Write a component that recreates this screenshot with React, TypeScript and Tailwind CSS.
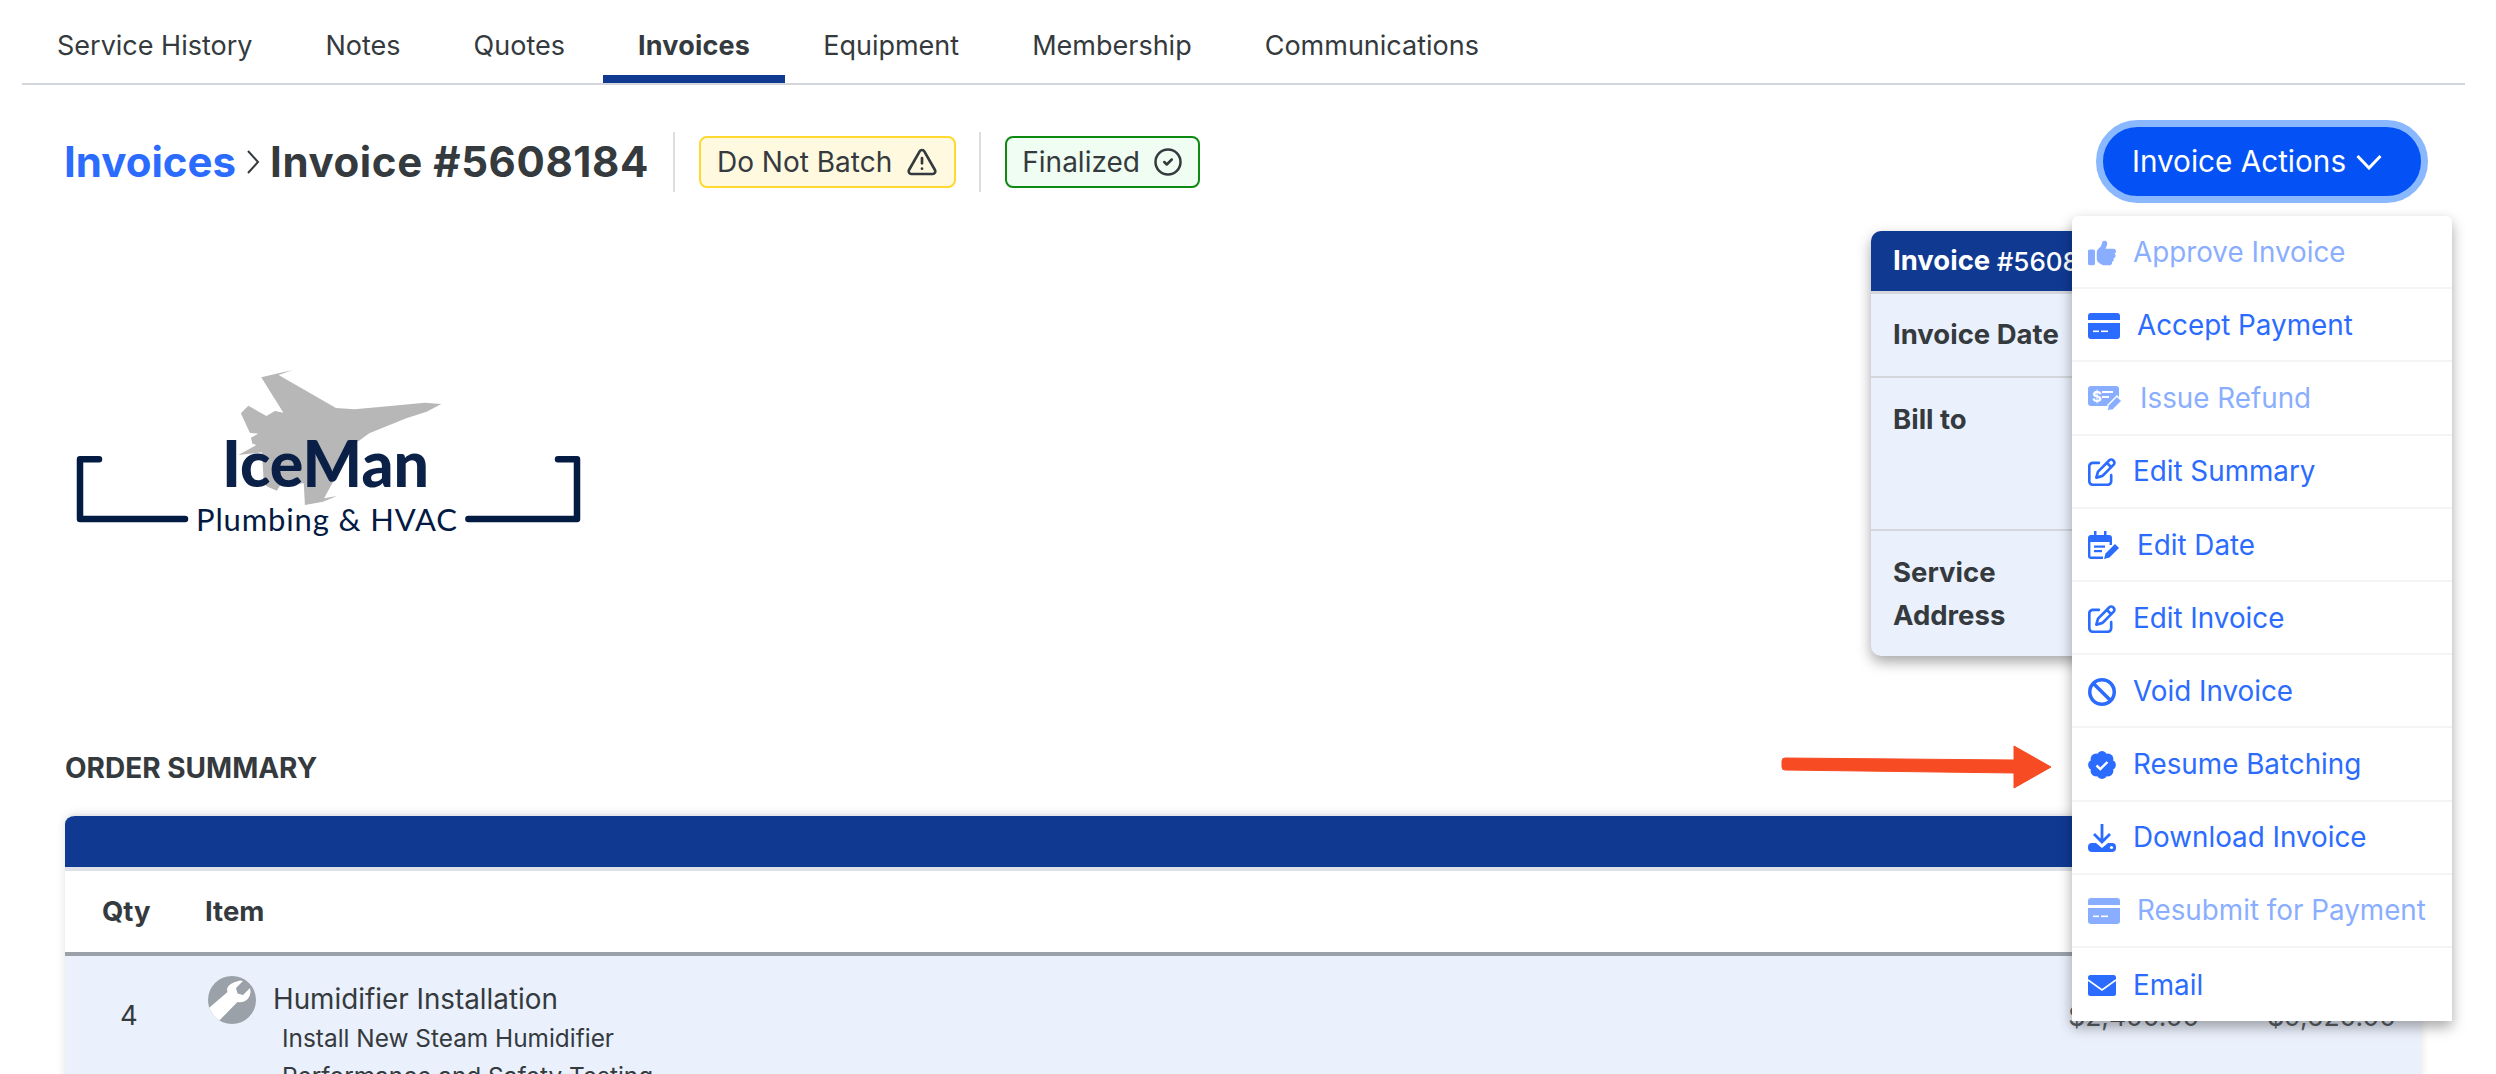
import { CircleCheck, TriangleAlert } from 'lucide-react'
import { FaBan, FaRegPenToSquare, FaThumbsUp } from 'react-icons/fa6'

const tabs = ['Service History', 'Notes', 'Quotes', 'Invoices', 'Equipment', 'Membership', 'Communications']

function CardIcon() {
  return (
    <svg width="32" height="26" viewBox="0 0 32 26" fill="currentColor">
      <path d="M3 0h26a3 3 0 0 1 3 3v4H0V3a3 3 0 0 1 3-3z" />
      <path d="M0 10h32v13a3 3 0 0 1-3 3H3a3 3 0 0 1-3-3z" />
      <rect x="5" y="17.5" width="6" height="1.6" fill="#fff" />
      <rect x="13" y="17.5" width="7" height="1.6" fill="#fff" />
    </svg>
  )
}

function RefundIcon() {
  return (
    <svg width="35" height="25" viewBox="0 0 35 25" fill="currentColor">
      <rect x="0" y="0" width="31" height="20" rx="3" />
      <text x="4" y="16" fontSize="15" fontWeight="700" fill="#fff" fontFamily="Inter, sans-serif">$</text>
      <rect x="14" y="5" width="11" height="2" fill="#fff" />
      <rect x="14" y="10" width="7" height="2" fill="#fff" />
      <path d="M19 25l1-6 9-9 5 5-9 9z" stroke="#fff" strokeWidth="1.5" />
    </svg>
  )
}

function DateIcon() {
  return (
    <svg width="32" height="28" viewBox="0 0 32 28" fill="currentColor">
      <rect x="6" y="0" width="2.5" height="5" />
      <rect x="16" y="0" width="2.5" height="5" />
      <path d="M3 4h18a3 3 0 0 1 3 3v4H0V7a3 3 0 0 1 3-3z" />
      <path d="M1.2 10v15a1.8 1.8 0 0 0 1.8 1.8h12M22.8 10v4" fill="none" stroke="currentColor" strokeWidth="2.4" />
      <rect x="6" y="14.5" width="11" height="2.2" />
      <rect x="6" y="19" width="8" height="2.2" />
      <path d="M16 28l1.500-5.500L27 13l4 4-9.500 9.500z" />
    </svg>
  )
}

function BadgeIcon() {
  const lobes = [0, 45, 90, 135, 180, 225, 270, 315]
  return (
    <svg width="28" height="28" viewBox="0 0 28 28" fill="currentColor">
      <circle cx="14" cy="14" r="11.500" />
      {lobes.map((a) => (
        <circle
          key={a}
          cx={14 + 8.5 * Math.cos((a * Math.PI) / 180)}
          cy={14 + 8.5 * Math.sin((a * Math.PI) / 180)}
          r="5.4"
        />
      ))}
      <path d="M8.500 14.500l3.800 3.500 7.200-7" fill="none" stroke="#fff" strokeWidth="2.400" />
    </svg>
  )
}

function DownloadIcon() {
  return (
    <svg width="28" height="28" viewBox="0 0 28 28" fill="currentColor">
      <path d="M14 0v17M6 10l8 8 8-8" fill="none" stroke="currentColor" strokeWidth="2.800" />
      <path d="M4 19h4l6 5 6-5h4a4 4 0 0 1 4 4v1a4 4 0 0 1-4 4H4a4 4 0 0 1-4-4v-1a4 4 0 0 1 4-4z" />
      <circle cx="23.500" cy="23.500" r="1.600" fill="#fff" />
    </svg>
  )
}

function EmailIcon() {
  return (
    <svg width="28" height="21" viewBox="0 0 28 21">
      <rect width="28" height="21" rx="2.500" fill="currentColor" />
      <path d="M0 5l14 10L28 5" fill="none" stroke="#fff" strokeWidth="1.600" />
    </svg>
  )
}

const menu = [
  { label: 'Approve Invoice', icon: <FaThumbsUp size={28} />, off: true },
  { label: 'Accept Payment', icon: <CardIcon /> },
  { label: 'Issue Refund', icon: <RefundIcon />, off: true },
  { label: 'Edit Summary', icon: <FaRegPenToSquare size={28} /> },
  { label: 'Edit Date', icon: <DateIcon /> },
  { label: 'Edit Invoice', icon: <FaRegPenToSquare size={28} /> },
  { label: 'Void Invoice', icon: <FaBan size={28} /> },
  { label: 'Resume Batching', icon: <BadgeIcon /> },
  { label: 'Download Invoice', icon: <DownloadIcon /> },
  { label: 'Resubmit for Payment', icon: <CardIcon />, off: true },
  { label: 'Email', icon: <EmailIcon /> },
]

function Logo() {
  return (
    <svg width="580" height="220" viewBox="0 0 580 220" fontFamily="Lato, sans-serif">
      <path
        fill="#b7b7b7"
        d="M252.700 30L221.200 37.300 243.400 72.700 234.900 71 226.400 76 208.300 65.700 200.900 73.300 209.800 92.700 218.300 93.700 210.900 97.700 212.400 103.700 216.400 105 198.300 115 222 112.300 223.800 143.300 227.500 146.700 236.800 150.700 240.500 145 263.800 143.300 264.900 165 283 161.700 297.100 156 284.100 158.300 292.300 143.300 310.800 106.700 329.300 93.300 366.300 78.300 386.600 71.700 401.400 64 384.800 62.700 342.200 66.700 314.500 69.300 296 68 238.600 35z"
      />
      <g fill="none" stroke="#031a42" strokeWidth="6.500" strokeLinecap="round" strokeLinejoin="round">
        <path d="M59 119.300H40V179H145" />
        <path d="M518 119.300H537V179H428.400" />
      </g>
      <text x="182" y="147" fontSize="64" fontWeight="900" fill="#031a42" fillOpacity="0.97" textLength="207" lengthAdjust="spacingAndGlyphs">
        IceMan
      </text>
      <text x="156" y="191" fontSize="31" fill="#031a42" textLength="261" lengthAdjust="spacing">
        Plumbing &amp; HVAC
      </text>
    </svg>
  )
}

export default function App() {
  return (
    <div className="relative h-[1074px] w-[2496px] overflow-hidden bg-white font-[Inter,sans-serif] text-[#343a3d]">
      {/* Tabs */}
      <nav className="ml-[22px] mr-[31px] flex h-[85px] gap-[3px] border-b-2 border-[#d3d7dc]">
        {tabs.map((t) => (
          <div
            key={t}
            className={
              t === 'Invoices'
                ? 'flex h-[83px] items-center border-b-8 border-[#103a92] px-[35px] pt-[18px] text-[27px] font-bold tracking-[0.2px]'
                : 'flex h-[83px] items-center px-[35px] pt-[10px] text-[27px]'
            }
          >
            {t}
          </div>
        ))}
      </nav>

      {/* Title row */}
      <div className="flex items-center pl-[64px] pr-[68px] pt-[35px]">
        <span className="text-[42px] font-bold text-[#2b6cff]">Invoices</span>
        <svg className="mx-[10px]" width="14" height="24" viewBox="0 0 14 24" fill="none" stroke="#343a3d" strokeWidth="2">
          <path d="M2 1l10 11L2 23" />
        </svg>
        <span className="text-[42px] font-bold tracking-[0.6px]">Invoice #5608184</span>
        <div className="ml-[24px] h-[60px] w-[2px] bg-[#dcdfe2]" />
        <div className="ml-[24px] flex h-[52px] items-center gap-[14px] rounded-[8px] border-2 border-[#ffd92e] bg-[#fff9e0] px-[16px] text-[28px]">
          Do Not Batch
          <TriangleAlert size={32} strokeWidth={2} />
        </div>
        <div className="ml-[23px] h-[60px] w-[2px] bg-[#dcdfe2]" />
        <div className="ml-[24px] flex h-[52px] items-center gap-[13px] rounded-[8px] border-2 border-[#0c8a12] bg-[#f0fdf2] px-[15px] text-[28px]">
          Finalized
          <CircleCheck size={30} strokeWidth={2} />
        </div>
        <button className="ml-auto flex h-[83px] w-[332px] items-center justify-center gap-[10px] rounded-full border-[7px] border-[#8ab8ff] bg-[#0452f6] pr-[10px] text-[29.7px] text-white">
          Invoice Actions
          <svg width="26" height="16" viewBox="0 0 26 16" fill="none" stroke="#fff" strokeWidth="3">
            <path d="M1.500 2L13 14 24.500 2" />
          </svg>
        </button>
      </div>

      {/* Logo and invoice panel */}
      <div className="mt-[28px] flex justify-between pl-[40px] pr-[72px]">
        <div className="pt-[109px]">
          <Logo />
        </div>
        <div className="h-[425px] w-[553px] overflow-hidden rounded-[10px] bg-[#eaf0fc] text-[27.5px] font-bold shadow-[0_6px_14px_rgba(0,0,0,0.35)]">
          <div className="flex h-[63px] items-center border-b-[3px] border-[#d3d7dc] bg-[#103a92] px-[22px] text-white">
            Invoice&nbsp;<span className="text-[26px] font-medium">#5608184</span>
          </div>
          <div className="flex h-[84px] items-center border-b-2 border-[#d3d7dc] px-[22px]">Invoice Date</div>
          <div className="h-[153px] border-b-2 border-[#d3d7dc] px-[22px] pt-[20px] leading-[42px]">Bill to</div>
          <div className="px-[22px] pt-[20px] leading-[43px]">
            Service
            <br />
            Address
          </div>
        </div>
      </div>

      {/* Order summary */}
      <div className="mt-[95px] pl-[65px] pr-[75px]">
        <h2 className="h-[34px] text-[28px] font-bold leading-[34px]">ORDER SUMMARY</h2>
        <div className="mt-[29px] overflow-hidden rounded-t-[10px] border-t-2 border-[#e6e8eb] shadow-[0_0_10px_rgba(0,0,0,0.12)]">
          <div className="h-[51px] border-b-4 border-[#dee2e8] bg-[#103a92] box-content" />
          <div className="flex h-[81px] items-center text-[27.5px] font-bold">
            <span className="w-[140px] pl-[37px]">Qty</span>
            <span>Item</span>
          </div>
          <div className="flex h-[200px] border-t-4 border-[#9aa1a9] bg-[#eaf0fc] text-[27.5px]">
            <span className="w-[143px] pt-[41px] pl-[55px] leading-[36px]">4</span>
            <div className="pt-[20px]">
              <svg width="48" height="48" viewBox="0 0 48 48">
                <defs>
                  <clipPath id="wrench-clip">
                    <circle cx="24" cy="24" r="24" />
                  </clipPath>
                </defs>
                <circle cx="24" cy="24" r="24" fill="#9aa1a9" />
                <g clipPath="url(#wrench-clip)" fill="#fff">
                  <path d="M27 6l5-1.500 3 .5-7 7 1.500 5.500 5.500 1.500 7-7 .5 3.500c0 7-6 12-13 10.500L6 50-6 38 19.500 16C18 12 21 8 27 6z" />
                </g>
              </svg>
            </div>
            <div className="pl-[17px] pt-[24px]">
              <p className="text-[27.8px] leading-[39px]">Humidifier Installation</p>
              <p className="pl-[9px] text-[24.4px] leading-[38px]">Install New Steam Humidifier</p>
              <p className="pl-[9px] text-[24.4px] leading-[38px]">Performance and Safety Testing</p>
            </div>
            <span className="ml-auto pt-[42px] text-[26.5px] leading-[36px] text-[#5a6066]">$2,400.00</span>
            <span className="ml-[68px] pr-[25px] pt-[42px] text-[26.5px] leading-[36px] text-[#5a6066]">$9,620.00</span>
          </div>
        </div>
      </div>

      {/* Dropdown */}
      <div className="absolute left-[2072px] top-[216px] w-[380px] rounded-t-[6px] bg-white text-[#2b6cff] shadow-[0_6px_14px_rgba(0,0,0,0.35)]">
        {menu.map((m, i) => (
          <div
            key={m.label}
            className={`flex h-[73.2px] items-center gap-[17px] pl-[16px] pt-[2px] text-[27.8px] ${i < menu.length - 1 ? 'border-b-2 border-[#f3f4f6]' : ''}`}
          >
            <span className={m.off ? 'flex opacity-55' : 'flex'}>{m.icon}</span>
            <span className={m.off ? 'opacity-55' : ''}>{m.label}</span>
          </div>
        ))}
      </div>

      {/* Annotation arrow */}
      <svg className="absolute left-[1780px] top-[744px]" width="274" height="46" viewBox="0 0 274 46" fill="#f74b24">
        <path d="M5 14l229 2V2l37 21-37 21V29L5 26a3 3 0 0 1-3-3v-6a3 3 0 0 1 3-3z" stroke="#f74b24" strokeLinejoin="round" />
      </svg>
    </div>
  )
}
